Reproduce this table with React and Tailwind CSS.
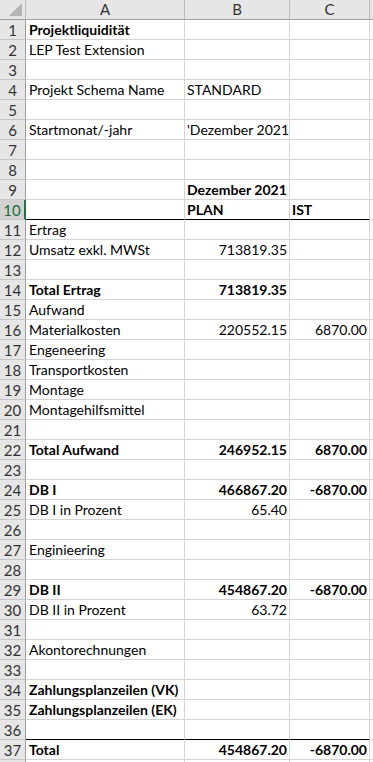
const rows = [
  { a: 'Projektliquidität', bold: true },
  { a: 'LEP Test Extension' },
  {},
  { a: 'Projekt Schema Name', b: 'STANDARD', bLeft: true },
  {},
  { a: 'Startmonat/-jahr', b: "'Dezember 2021", bLeft: true },
  {},
  {},
  { b: 'Dezember 2021', bLeft: true, bold: true },
  { b: 'PLAN', c: 'IST', bLeft: true, cLeft: true, bold: true, selected: true, lineBelow: true },
  { a: 'Ertrag' },
  { a: 'Umsatz exkl. MWSt', b: '713819.35' },
  {},
  { a: 'Total Ertrag', b: '713819.35', bold: true },
  { a: 'Aufwand' },
  { a: 'Materialkosten', b: '220552.15', c: '6870.00' },
  { a: 'Engeneering' },
  { a: 'Transportkosten' },
  { a: 'Montage' },
  { a: 'Montagehilfsmittel' },
  {},
  { a: 'Total Aufwand', b: '246952.15', c: '6870.00', bold: true },
  {},
  { a: 'DB I', b: '466867.20', c: '-6870.00', bold: true },
  { a: 'DB I in Prozent', b: '65.40' },
  {},
  { a: 'Enginieering' },
  {},
  { a: 'DB II', b: '454867.20', c: '-6870.00', bold: true },
  { a: 'DB II in Prozent', b: '63.72' },
  {},
  { a: 'Akontorechnungen' },
  {},
  { a: 'Zahlungsplanzeilen (VK)', bold: true },
  { a: 'Zahlungsplanzeilen (EK)', bold: true },
  { lineBelow: true },
  { a: 'Total', b: '454867.20', c: '-6870.00', bold: true },
  { hideNum: true },
];

const cols = 'grid grid-cols-[26px_159px_105px_80px_1fr]';

const App = () => {
  return (
    <div className="w-[373px] h-[762px] overflow-hidden bg-white font-['Lato','Liberation_Sans',sans-serif] text-[14px] text-black">
      {/* column headers */}
      <div className={`${cols} h-[20px] bg-[#e6e6e6] border-b border-[#9e9e9e] text-[#333] text-[15px]`}>
        <div className="relative border-r border-[#bdbdbd]">
          <div className="absolute right-[3px] bottom-[3px] w-0 h-0 border-l-[13px] border-l-transparent border-b-[13px] border-b-[#b4b4b4]" />
        </div>
        <div className="flex items-center justify-center border-r border-[#bdbdbd] leading-none">A</div>
        <div className="flex items-center justify-center border-r border-[#bdbdbd] leading-none">B</div>
        <div className="flex items-center justify-center border-r border-[#bdbdbd] leading-none">C</div>
        <div />
      </div>

      {rows.map((r, i) => {
        const w = r.bold ? 'font-bold' : '';
        const line = r.lineBelow ? 'border-b-black' : 'border-b-[#d4d4d4]';
        return (
          <div key={i} className={`${cols} h-[20px]`}>
            <div
              className={`flex items-center justify-center pt-[1px] border-b border-[#c6c6c6] leading-none text-[15px] ${
                r.selected
                  ? 'bg-[#d2d2d2] text-[#1e6b40] border-r-2 border-r-[#217346]'
                  : 'bg-[#e6e6e6] text-[#333] border-r border-r-[#9e9e9e]'
              }`}
            >
              {r.hideNum ? '' : i + 1}
            </div>
            <div className={`flex items-center pl-[3px] pt-[1px] border-r border-r-[#d4d4d4] border-b ${line} whitespace-nowrap leading-none ${w}`}>
              {r.a}
            </div>
            <div
              className={`flex items-center pt-[1px] border-r border-r-[#d4d4d4] border-b ${line} whitespace-nowrap leading-none ${w} ${
                r.bLeft ? 'pl-[2px]' : 'justify-end pr-[2px]'
              }`}
            >
              {r.b}
            </div>
            <div
              className={`flex items-center pt-[1px] border-r border-r-[#d4d4d4] border-b ${line} whitespace-nowrap leading-none ${w} ${
                r.cLeft ? 'pl-[2px]' : 'justify-end pr-[2px]'
              }`}
            >
              {r.c}
            </div>
            <div className="border-b border-[#d4d4d4]" />
          </div>
        );
      })}
    </div>
  );
};

export default App;
